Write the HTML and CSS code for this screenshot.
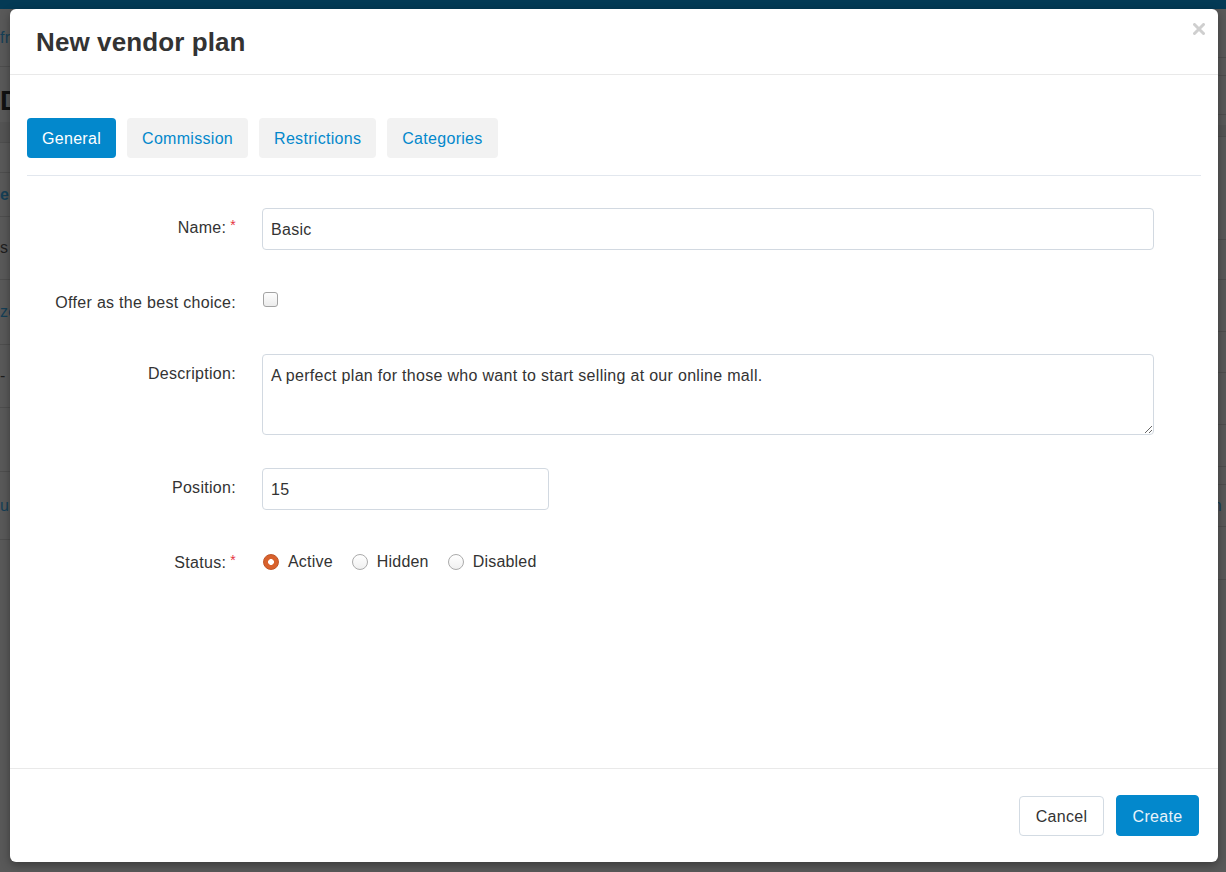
FILE: index.html
```html
<!DOCTYPE html>
<html lang="en">
<head>
<meta charset="utf-8">
<title>New vendor plan</title>
<link rel="stylesheet" href="styles.css">
</head>
<body>
<div class="bg-page">
  <div class="bg-topbar"></div>
  <div class="bg-columns">
    <div class="bg-col bg-left">
      <div class="bg-row h58"><span class="bg-link">free</span></div>
      <div class="bg-row h55 noline"><span class="bg-heading">D</span></div>
      <div class="bg-row h21 band"></div>
      <div class="bg-row h30"></div>
      <div class="bg-row h44"><span class="bg-link bold">e</span></div>
      <div class="bg-row h63"><span class="bg-text">s</span></div>
      <div class="bg-row h65"><span class="bg-link">ze</span></div>
      <div class="bg-row h63"><span class="bg-text">-</span></div>
      <div class="bg-row h64"></div>
      <div class="bg-row h68"><span class="bg-link">u</span></div>
    </div>
    <div class="bg-col bg-right">
      <div class="bg-row h49"></div>
      <div class="bg-row h18"></div>
      <div class="bg-row h39"></div>
      <div class="bg-row h10 noline"></div>
      <div class="bg-row h12 band"></div>
      <div class="bg-row h103"></div>
      <div class="bg-row h40"></div>
      <div class="bg-row h52"></div>
      <div class="bg-row h41"></div>
      <div class="bg-row h52"></div>
      <div class="bg-row h42"></div>
      <div class="bg-row h18"></div>
      <div class="bg-row h42 right"><span class="bg-link">Design</span></div>
      <div class="bg-row h53"></div>
    </div>
  </div>
</div>

<div class="modal">
  <div class="modal-header">
    <h1 class="modal-title">New vendor plan</h1>
    <button class="close-btn" type="button" aria-label="Close">
      <svg width="12" height="12" viewBox="0 0 12 12"><path d="M1.5 1.5 L10.5 10.5 M10.5 1.5 L1.5 10.5" stroke="#cfcfcf" stroke-width="3" stroke-linecap="round" fill="none"/></svg>
    </button>
  </div>

  <div class="modal-body">
    <div class="tabs">
      <span class="tab active">General</span>
      <span class="tab">Commission</span>
      <span class="tab">Restrictions</span>
      <span class="tab">Categories</span>
    </div>

    <form class="form">
      <div class="form-row">
        <label class="form-label">Name:<span class="req">*</span></label>
        <div class="form-control"><input class="input input-wide" type="text" value="Basic"></div>
      </div>
      <div class="form-row row-short">
        <label class="form-label">Offer as the best choice:</label>
        <div class="form-control"><input class="checkbox" type="checkbox"></div>
      </div>
      <div class="form-row">
        <label class="form-label">Description:</label>
        <div class="form-control"><textarea class="input textarea">A perfect plan for those who want to start selling at our online mall.</textarea></div>
      </div>
      <div class="form-row">
        <label class="form-label">Position:</label>
        <div class="form-control"><input class="input input-short" type="text" value="15"></div>
      </div>
      <div class="form-row row-short">
        <label class="form-label">Status:<span class="req">*</span></label>
        <div class="form-control radios">
          <label class="radio-item"><input class="radio" type="radio" name="status" checked><span>Active</span></label>
          <label class="radio-item"><input class="radio" type="radio" name="status"><span>Hidden</span></label>
          <label class="radio-item"><input class="radio" type="radio" name="status"><span>Disabled</span></label>
        </div>
      </div>
    </form>
  </div>

  <div class="modal-footer">
    <button class="btn btn-default" type="button">Cancel</button>
    <button class="btn btn-primary" type="button">Create</button>
  </div>
</div>
</body>
</html>
```

FILE: styles.css
```css
* { box-sizing: border-box; }

html, body {
  margin: 0;
  padding: 0;
}

body {
  width: 1226px;
  height: 872px;
  overflow: hidden;
  position: relative;
  background: #595959;
  font-family: "Liberation Sans", Arial, sans-serif;
  font-size: 16px;
  letter-spacing: 0.3px;
  color: #333;
}

/* dimmed page behind the dialog */
.bg-page {
  display: flex;
  flex-direction: column;
  height: 100%;
}
.bg-topbar {
  height: 9px;
  background: #033a55;
}
.bg-columns {
  display: flex;
  flex: 1;
}
.bg-col {
  width: 50%;
  display: flex;
  flex-direction: column;
}
.bg-row {
  border-bottom: 1px solid #4e4e4e;
  display: flex;
  align-items: center;
  font-size: 16px;
  overflow: hidden;
}
.bg-row.noline { border-bottom: 0; }
.bg-row.band { background: #545454; border-bottom: 1px solid #4e4e4e; }
.bg-row.right { justify-content: flex-end; padding-right: 4px; }
.h10 { height: 10px; } .h12 { height: 12px; } .h18 { height: 18px; }
.h21 { height: 21px; } .h30 { height: 30px; } .h39 { height: 39px; }
.h40 { height: 40px; } .h41 { height: 41px; } .h42 { height: 42px; }
.h44 { height: 44px; } .h49 { height: 49px; } .h52 { height: 52px; }
.h53 { height: 53px; } .h55 { height: 55px; } .h58 { height: 58px; }
.h63 { height: 63px; } .h64 { height: 64px; } .h65 { height: 65px; }
.h68 { height: 68px; } .h103 { height: 103px; }
.bg-link { color: #153f56; }
.bg-link.bold { font-weight: bold; }
.bg-text { color: #1e1e1e; }
.bg-heading { color: #111; font-weight: bold; font-size: 28px; margin-top: 12px; }

/* dialog */
.modal {
  position: absolute;
  left: 10px;
  top: 9px;
  width: 1208px;
  height: 853px;
  background: #fff;
  border-radius: 6px;
  box-shadow: 0 3px 10px rgba(0, 0, 0, 0.35);
  display: flex;
  flex-direction: column;
}

.modal-header {
  height: 66px;
  border-bottom: 1px solid #e9e9e9;
  display: flex;
  justify-content: space-between;
  align-items: center;
  padding: 0 13px 0 26px;
}
.modal-title {
  margin: 0;
  font-size: 26px;
  font-weight: bold;
  color: #333;
  line-height: 32px;
  letter-spacing: 0.1px;
}
.close-btn {
  align-self: flex-start;
  margin-top: 14px;
  border: 0;
  background: none;
  padding: 0;
  width: 12px;
  height: 12px;
  display: flex;
}

.modal-body {
  flex: 1;
  padding: 43px 17px 0;
}

.tabs {
  display: flex;
  gap: 11px;
  padding-bottom: 17px;
  border-bottom: 1px solid #e2e7ee;
}
.tab {
  height: 40px;
  line-height: 41px;
  padding: 0 15px;
  border-radius: 4px;
  background: #f2f2f2;
  color: #0388cc;
  font-size: 16px;
}
.tab.active {
  background: #0388cc;
  color: #fff;
}

.form {
  margin-top: 32px;
}
.form-row {
  display: flex;
  gap: 26px;
  margin-bottom: 33px;
}
.form-row.row-short {
  min-height: 38px;
}
.form-label {
  width: 209px;
  flex: none;
  text-align: right;
  padding-top: 10px;
  line-height: 20px;
  color: #333;
  font-size: 16px;
  white-space: nowrap;
}
.req {
  color: #e5333f;
  font-size: 14px;
  margin-left: 4px;
  position: relative;
  top: -3px;
}
.form-control {
  display: flex;
}

.input {
  height: 42px;
  border: 1px solid #d2d9e1;
  border-radius: 4px;
  padding: 1px 8px 0;
  font-family: "Liberation Sans", Arial, sans-serif;
  font-size: 16px;
  letter-spacing: 0.3px;
  color: #333;
  background: #fff;
  outline: none;
}
.input-wide { width: 892px; }
.input-short { width: 287px; }
.textarea {
  width: 892px;
  height: 81px;
  padding: 10px 8px;
  line-height: 22px;
  resize: vertical;
}

.checkbox {
  appearance: none;
  -webkit-appearance: none;
  margin: 9px 0 0 1px;
  width: 15px;
  height: 15px;
  border: 1px solid #a3a3a3;
  border-radius: 3px;
  background: linear-gradient(#fdfdfd, #ececec);
}

.radios {
  gap: 18px;
  padding-top: 9px;
  line-height: 20px;
  align-items: center;
  align-self: flex-start;
}
.radio-item {
  display: flex;
  align-items: center;
  gap: 9px;
  color: #333;
  letter-spacing: 0.2px;
}
.radio {
  appearance: none;
  -webkit-appearance: none;
  margin: 0 0 0 1px;
  width: 16px;
  height: 16px;
  border-radius: 50%;
  border: 1px solid #ababab;
  background: linear-gradient(#ffffff, #f0f0f0);
}
.radio:checked {
  border: 1px solid #bf5426;
  background: radial-gradient(circle, #ffffff 0 2.6px, #d8612c 3.2px);
}

.modal-footer {
  height: 94px;
  border-top: 1px solid #e9e9e9;
  display: flex;
  justify-content: flex-end;
  align-items: flex-start;
  gap: 12px;
  padding: 27px 19px 0 0;
}
.btn {
  height: 40px;
  border-radius: 4px;
  font-family: "Liberation Sans", Arial, sans-serif;
  font-size: 16px;
  letter-spacing: 0.3px;
  padding: 0 10px;
  line-height: 20px;
  cursor: pointer;
}
.btn-default {
  background: #fff;
  border: 1px solid #d3dbe3;
  color: #333;
  width: 85px;
  padding-top: 1px;
}
.btn-primary {
  background: #0388cc;
  border: 1px solid #0388cc;
  color: #e8f3fa;
  width: 83px;
  height: 41px;
  margin-top: -1px;
  padding-top: 3px;
}
```
